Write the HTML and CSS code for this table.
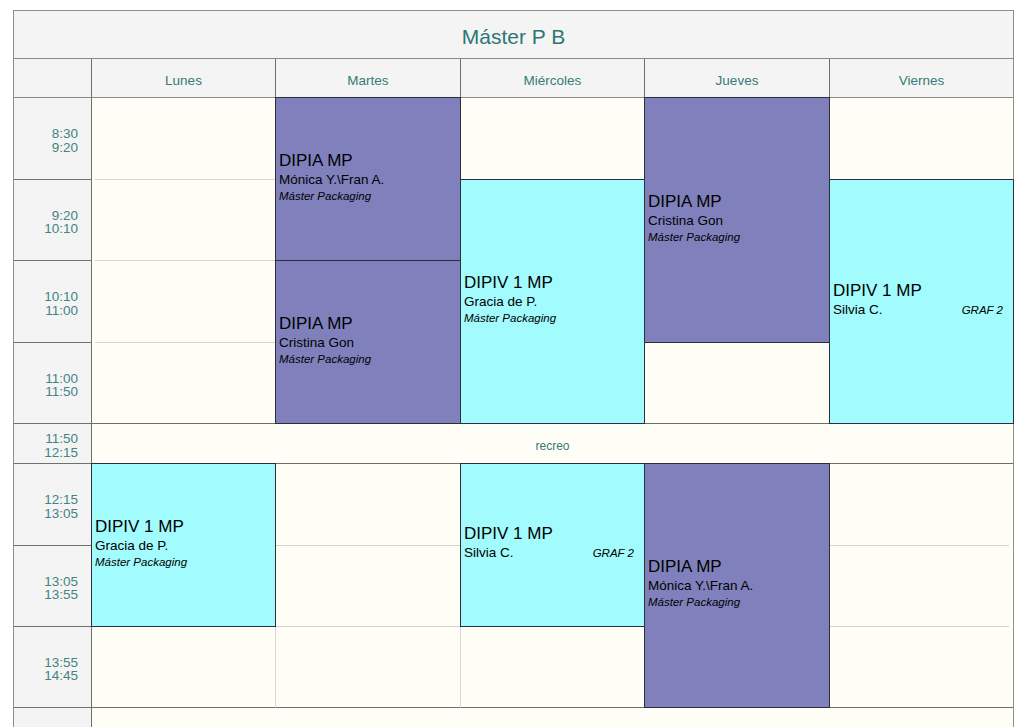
FILE: index.html
```html
<!DOCTYPE html>
<html lang="es">
<head>
<meta charset="utf-8">
<title>Máster P B</title>
<link rel="stylesheet" href="styles.css">
</head>
<body>
<div class="timetable">
  <div class="title">Máster P B</div>
  <div class="grid">
    <div class="hd"></div>
    <div class="hd">Lunes</div>
    <div class="hd">Martes</div>
    <div class="hd">Miércoles</div>
    <div class="hd">Jueves</div>
    <div class="hd hd-last">Viernes</div>

    <div class="time"><span>8:30<br>9:20</span></div>
    <div class="slot mon"></div>
    <div class="ev purple span2">
      <div class="ev-t">DIPIA MP</div>
      <div class="ev-n"><span>Mónica Y.\Fran A.</span></div>
      <div class="ev-g">Máster Packaging</div>
    </div>
    <div class="slot"></div>
    <div class="ev purple span3">
      <div class="ev-t">DIPIA MP</div>
      <div class="ev-n"><span>Cristina Gon</span></div>
      <div class="ev-g">Máster Packaging</div>
    </div>
    <div class="slot fri"></div>

    <div class="time"><span>9:20<br>10:10</span></div>
    <div class="slot mon"></div>
    <div class="ev cyan span3">
      <div class="ev-t">DIPIV 1 MP</div>
      <div class="ev-n"><span>Gracia de P.</span></div>
      <div class="ev-g">Máster Packaging</div>
    </div>
    <div class="ev cyan span3 ev-fri">
      <div class="ev-t">DIPIV 1 MP</div>
      <div class="ev-n"><span>Silvia C.</span><span class="room">GRAF 2</span></div>
    </div>

    <div class="time"><span>10:10<br>11:00</span></div>
    <div class="slot mon"></div>
    <div class="ev purple span2">
      <div class="ev-t">DIPIA MP</div>
      <div class="ev-n"><span>Cristina Gon</span></div>
      <div class="ev-g">Máster Packaging</div>
    </div>

    <div class="time"><span>11:00<br>11:50</span></div>
    <div class="slot end"></div>
    <div class="slot end"></div>

    <div class="time"><span>11:50<br>12:15</span></div>
    <div class="recreo">recreo</div>

    <div class="time"><span>12:15<br>13:05</span></div>
    <div class="ev cyan span2">
      <div class="ev-t">DIPIV 1 MP</div>
      <div class="ev-n"><span>Gracia de P.</span></div>
      <div class="ev-g">Máster Packaging</div>
    </div>
    <div class="slot"></div>
    <div class="ev cyan span2">
      <div class="ev-t">DIPIV 1 MP</div>
      <div class="ev-n"><span>Silvia C.</span><span class="room">GRAF 2</span></div>
    </div>
    <div class="ev purple span3">
      <div class="ev-t">DIPIA MP</div>
      <div class="ev-n"><span>Mónica Y.\Fran A.</span></div>
      <div class="ev-g">Máster Packaging</div>
    </div>
    <div class="slot fri"></div>

    <div class="time"><span>13:05<br>13:55</span></div>
    <div class="slot"></div>
    <div class="slot fri"></div>

    <div class="time"><span>13:55<br>14:45</span></div>
    <div class="slot end"></div>
    <div class="slot end"></div>
    <div class="slot end"></div>
    <div class="slot end fri"></div>

    <div class="time"></div>
    <div class="wide"></div>
  </div>
</div>
</body>
</html>
```

FILE: styles.css
```css
html, body {
  margin: 0;
  padding: 0;
  height: 727px;
  overflow: hidden;
  background: #ffffff;
}

body {
  font-family: "Liberation Sans", Arial, sans-serif;
}

.timetable {
  margin: 10px 0 0 13px;
  width: 1001px;
  box-sizing: border-box;
  border: 1px solid #8e8e8e;
  border-bottom: 0;
}

.title {
  height: 48px;
  box-sizing: border-box;
  padding-top: 5px;
  line-height: 42px;
  border-bottom: 1px solid #8a8a8a;
  background: #f4f4f4;
  text-align: center;
  font-size: 21px;
  color: #2c7774;
}

.grid {
  display: grid;
  grid-template-columns: 78px 184px 185px 184px 185px 1fr;
  grid-template-rows: 39px 82px 81px 82px 81px 40px 82px 81px 81px 40px;
}

.hd {
  box-sizing: border-box;
  background: #f4f4f4;
  border-right: 1px solid #6e6e6e;
  border-bottom: 1px solid #8a8a8a;
  display: flex;
  align-items: center;
  justify-content: center;
  padding-top: 5px;
  font-size: 13.5px;
  color: #367b78;
}

.hd-last {
  border-right: 0;
}

.time {
  box-sizing: border-box;
  background: #f4f4f4;
  border-right: 1px solid #707070;
  border-bottom: 1px solid #707070;
  display: flex;
  align-items: center;
  justify-content: flex-end;
  padding: 4px 13px 0 0;
  text-align: right;
  font-size: 13.5px;
  line-height: 13.5px;
  color: #428481;
}

.slot {
  box-sizing: border-box;
  background: linear-gradient(#d4d4d4, #d4d4d4) left bottom / 100% 1px no-repeat, #fffef6;
  border-right: 1px solid #d8d8d8;
}

.slot.mon {
  background-position: 3px bottom;
  background-size: calc(100% - 3px) 1px;
}

.slot.fri {
  border-right: 0;
  background-size: calc(100% - 4px) 1px;
}

.slot.end {
  background: #fffef6;
  border-bottom: 1px solid #6e6e6e;
}

.recreo {
  grid-column: span 5;
  box-sizing: border-box;
  background: #fffef6;
  border-bottom: 1px solid #6e6e6e;
  display: flex;
  align-items: center;
  justify-content: center;
  padding-top: 4px;
  font-size: 12px;
  color: #367b78;
}

.wide {
  grid-column: span 5;
  background: #fffef6;
}

.ev {
  z-index: 1;
  margin: -1px 0 0 -1px;
  box-sizing: border-box;
  border: 1px solid #2e2e3a;
  display: flex;
  flex-direction: column;
  justify-content: center;
  padding: 0 10px 4px 3px;
  color: #000000;
}

.ev-fri {
  margin-right: -1px;
}

.span2 {
  grid-row: span 2;
}

.span3 {
  grid-row: span 3;
}

.purple {
  background: #8080bc;
}

.cyan {
  background: #a2fbfc;
}

.ev-t {
  font-size: 17px;
  line-height: 20px;
}

.ev-n {
  display: flex;
  justify-content: space-between;
  align-items: baseline;
  font-size: 13.5px;
  line-height: 18px;
}

.room {
  font-size: 11.5px;
  font-style: italic;
}

.ev-g {
  font-size: 11.5px;
  line-height: 15px;
  font-style: italic;
}
```
